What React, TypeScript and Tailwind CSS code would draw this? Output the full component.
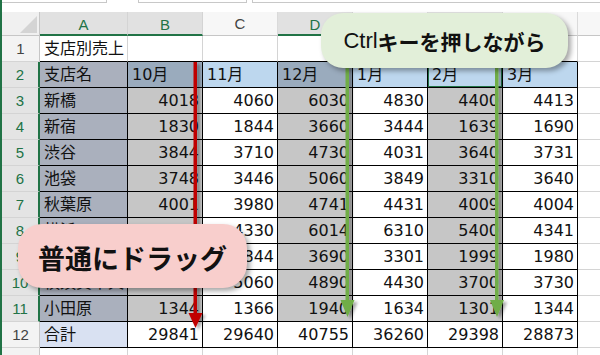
import React from "react";

const cols = ["A", "B", "C", "D", "E", "F", "G"];
const selectedCols = [0, 1, 3, 5];

const rows: string[][] = [
  ["支店別売上", "", "", "", "", "", ""],
  ["支店名", "10月", "11月", "12月", "1月", "2月", "3月"],
  ["新橋", "4018", "4060", "6030", "4830", "4400", "4413"],
  ["新宿", "1830", "1844", "3660", "3444", "1639", "1690"],
  ["渋谷", "3844", "3710", "4730", "4031", "3640", "3731"],
  ["池袋", "3748", "3446", "5060", "3849", "3310", "3640"],
  ["秋葉原", "4001", "3980", "4741", "4431", "4009", "4004"],
  ["横浜", "4320", "4330", "6014", "6310", "5400", "4341"],
  ["大宮", "2683", "1844", "3690", "3301", "1999", "1980"],
  ["横須賀中央", "4053", "5060", "4890", "4430", "3700", "3730"],
  ["小田原", "1344", "1366", "1940", "1634", "1301", "1344"],
  ["合計", "29841", "29640", "40755", "36260", "29398", "28873"],
  ["", "", "", "", "", "", ""],
];

function cellClass(r: number, c: number) {
  // r: 1-based row number, c: 0..6 (A..G)
  const inTable = r >= 2 && r <= 12;
  let border = "border-r-[#d4d4d4] border-b-[#d4d4d4]";
  if (inTable) border = "border-r-black border-b-black";
  else if (r === 1) border = "border-r-[#d4d4d4] border-b-black";

  let bg = "bg-white";
  if (r === 2) {
    if (c === 0) bg = "bg-[#aab0bd]";
    else if (c === 1 || c === 3) bg = "bg-[#9aabbd]";
    else if (c === 5) bg = "bg-[#bdd7ee] shadow-[inset_0_0_0_1px_#217346]";
    else bg = "bg-[#bdd7ee]";
  } else if (r >= 3 && r <= 11) {
    if (c === 0) bg = "bg-[#aab0bd]";
    else if (c === 1 || c === 3 || c === 5) bg = "bg-[#c6c6c6]";
  } else if (r === 12 && c === 0) {
    bg = "bg-[#d9e1f2]";
  }

  const left = r <= 2 || c === 0;
  const align = left ? "justify-start pl-[4px]" : "justify-end pr-[3px]";
  return `flex items-center overflow-hidden whitespace-nowrap border-r border-b ${border} ${bg} ${align}`;
}

export default function App() {
  return (
    <div className="flex h-[355px] w-[600px] overflow-hidden bg-white text-[#111] font-['DejaVu_Sans','Noto_Sans_CJK_JP',sans-serif] text-[16px] leading-none">
      <div className="h-full w-[2px] shrink-0 bg-[#217346]" />
      <div className="relative flex-1">
        {/* remains of the formula bar */}
        <div className="flex h-[12px] items-start">
          <div className="h-[3px] w-[105px] border-b border-r border-[#c8c8c8]" />
          <div className="h-[3px] w-[31px]" />
          <div className="h-[3px] w-[109px] border-b border-x border-[#c8c8c8]" />
          <div className="h-[3px] w-[5px]" />
          <div className="h-[3px] flex-1 border-b border-l border-[#c8c8c8]" />
        </div>

        <div className="grid grid-cols-[38px_88px_75px_75px_75px_75px_75px_75px_1fr] grid-rows-[24px_repeat(13,26px)]">
          {/* column headers */}
          <div className="relative border-r border-b border-[#c6c6c6] bg-[#f0f0f0]">
            <svg className="absolute bottom-[2px] right-[2px]" width="17" height="17" viewBox="0 0 17 17">
              <polygon points="17,0 17,17 0,17" fill="#d4d4d4" />
            </svg>
          </div>
          {cols.map((name, c) =>
            selectedCols.includes(c) ? (
              <div
                key={name}
                className="flex items-center justify-center border-r border-r-[#d4d4d4] border-b-2 border-b-[#217346] bg-[#e1e1e1] pt-[2px] font-['Liberation_Sans',sans-serif] text-[15px] text-[#217346]"
              >
                {name}
              </div>
            ) : (
              <div
                key={name}
                className="flex items-center justify-center border-r border-r-[#dadada] border-b border-b-[#c6c6c6] bg-[#f7f7f7] font-['Liberation_Sans',sans-serif] text-[15px] text-[#444]"
              >
                {name}
              </div>
            ),
          )}
          <div className="border-b border-[#c6c6c6] bg-[#f7f7f7]" />

          {rows.map((row, i) => {
            const r = i + 1;
            const picked = r >= 2 && r <= 11;
            return (
              <React.Fragment key={r}>
                {picked ? (
                  <div className="flex items-center justify-center border-r-2 border-r-[#217346] border-b border-b-[#d4d4d4] bg-[#e4e4e4] font-['Liberation_Sans',sans-serif] text-[15px] text-[#217346]">
                    {r}
                  </div>
                ) : (
                  <div className="flex items-center justify-center border-r border-r-[#c6c6c6] border-b border-b-[#d4d4d4] bg-[#f3f3f3] font-['Liberation_Sans',sans-serif] text-[15px] text-[#444]">
                    {r}
                  </div>
                )}
                {row.map((v, c) => (
                  <div key={c} className={cellClass(r, c)}>
                    {v}
                  </div>
                ))}
                <div className="border-b border-[#d4d4d4] bg-white" />
              </React.Fragment>
            );
          })}
        </div>

        {/* drag arrows */}
        <svg
          className="pointer-events-none absolute left-[-2px] top-0"
          width="600"
          height="355"
          viewBox="0 0 600 355"
        >
          <defs>
            <filter id="drop" x="-100%" y="-10%" width="300%" height="120%">
              <feDropShadow dx="3" dy="2" stdDeviation="1.5" floodColor="#000" floodOpacity="0.35" />
            </filter>
          </defs>
          <g filter="url(#drop)" fill="#c00000">
            <rect x="193.5" y="62" width="3.5" height="252" />
            <polygon points="188.5,313 202.5,313 195.5,328" />
          </g>
          <g filter="url(#drop)" fill="#70ad47">
            <rect x="345.5" y="62" width="3.5" height="239" />
            <polygon points="340.5,300 354.5,300 347.5,317" />
          </g>
          <g filter="url(#drop)" fill="#70ad47">
            <rect x="495" y="62" width="3.5" height="239" />
            <polygon points="490,300 504,300 497,317" />
          </g>
        </svg>

        {/* callouts */}
        <div className="absolute left-[319px] top-[13px] flex h-[55px] w-[247px] items-center justify-center rounded-[22px] bg-[#e2efd9] pt-[1px] shadow-[3px_3px_5px_rgba(0,0,0,0.35)]">
          <span className="font-['Liberation_Sans',sans-serif] text-[22px]">Ctrl</span>
          <span className="font-['Noto_Sans_CJK_JP',sans-serif] text-[21px] font-bold">キーを押しながら</span>
        </div>
        <div className="absolute left-[16px] top-[224px] flex h-[64px] w-[229px] items-center justify-center rounded-[24px] bg-[#f8cecc] pt-[2px] shadow-[3px_3px_5px_rgba(0,0,0,0.35)]">
          <span className="font-['Noto_Sans_CJK_JP',sans-serif] text-[27px] font-bold">普通にドラッグ</span>
        </div>
      </div>
    </div>
  );
}
